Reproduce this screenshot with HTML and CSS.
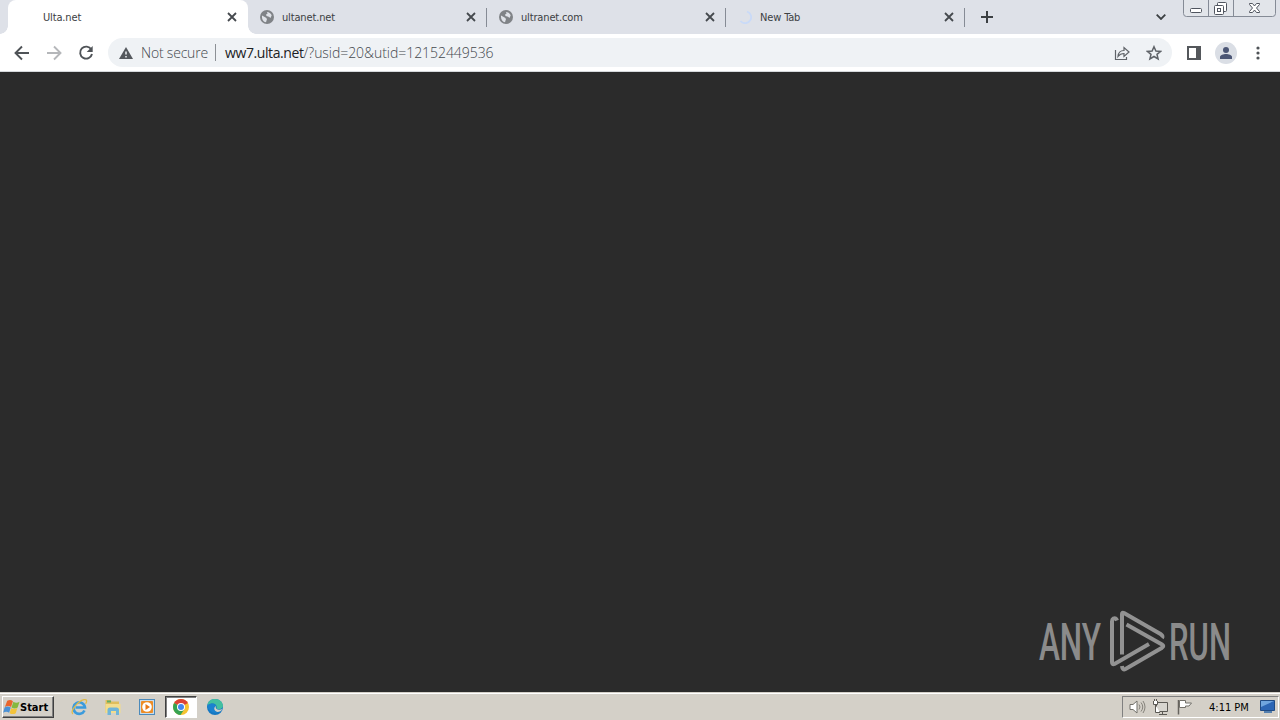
FILE: index.html
```html
<!DOCTYPE html>
<html lang="en">

<head>
    <meta charset="UTF-8">
    <title>Ulta.net</title>
    <link rel="stylesheet" href="styles.css">
</head>

<body>
    <div class="tab-strip">
        <div class="tab active">
            <span class="favicon"></span>
            <span class="title">Ulta.net</span>
            <svg class="close" viewBox="0 0 10 10"><path d="M1 1l8 8M9 1L1 9"/></svg>
        </div>
        <div class="tab">
            <svg class="favicon" viewBox="0 0 14 14"><circle cx="7" cy="7" r="7" fill="#808387"/><path d="M2 5.500l4 2.200 1 1.300-1 3.300C3.500 12 1.600 9.500 2 5.500zM7 2c2 0 4 1.300 4.700 3.300L10.500 8 9 6.700 6.500 6 6 4.500 7.500 3.800z" fill="#dfe2e8"/></svg>
            <span class="title">ultanet.net</span>
            <svg class="close" viewBox="0 0 10 10"><path d="M1 1l8 8M9 1L1 9"/></svg>
        </div>
        <div class="tab">
            <svg class="favicon" viewBox="0 0 14 14"><circle cx="7" cy="7" r="7" fill="#808387"/><path d="M2 5.500l4 2.200 1 1.300-1 3.300C3.500 12 1.600 9.500 2 5.500zM7 2c2 0 4 1.300 4.700 3.300L10.500 8 9 6.700 6.500 6 6 4.500 7.500 3.800z" fill="#dfe2e8"/></svg>
            <span class="title">ultranet.com</span>
            <svg class="close" viewBox="0 0 10 10"><path d="M1 1l8 8M9 1L1 9"/></svg>
        </div>
        <div class="tab">
            <svg class="favicon" viewBox="0 0 14 14"><path d="M9 1.500a6 6 0 1 1-6.500 9.500" fill="none" stroke="#c9daf8" stroke-width="1.800"/></svg>
            <span class="title">New Tab</span>
            <svg class="close" viewBox="0 0 10 10"><path d="M1 1l8 8M9 1L1 9"/></svg>
        </div>
        <svg class="new-tab" viewBox="0 0 12 12"><path d="M6 0v12M0 6h12"/></svg>
        <svg class="chevron" viewBox="0 0 10 6"><path d="M.7.700L5 5 9.300.700"/></svg>
        <svg class="window-buttons" viewBox="0 0 93 17">
            <path d="M.5 0v13.500q0 3 3 3h86q3 0 3-3V0" fill="#e2e5ea" stroke="#858b96"/>
            <path d="M25.500 0v16M50.500 0v16" stroke="#858b96"/>
            <g fill="#fff" stroke="#50555f">
                <rect x="7.500" y="8.500" width="11" height="4" rx="1"/>
                <rect x="34.500" y="2.500" width="9" height="9" rx="1"/>
                <rect x="31.500" y="5.500" width="9" height="9" rx="1"/>
                <rect x="34.500" y="8.500" width="3" height="3"/>
                <path d="M66.500 3.500h3l2 2.500 2-2.500h3v1L73.500 8l3 3.500v1h-3l-2-2.500-2 2.500h-3v-1l3-3.500-3-3.500z"/>
            </g>
        </svg>
    </div>

    <div class="toolbar">
        <svg class="nav" viewBox="0 0 16 16"><path d="M15 8H2M8 1.500L1.500 8 8 14.500"/></svg>
        <svg class="nav disabled" viewBox="0 0 16 16"><path d="M1 8h13M8 1.500L14.500 8 8 14.500"/></svg>
        <svg class="nav" viewBox="0 0 16 16"><path d="M13.300 4.500A6 6 0 1 0 14 9"/><path d="M14.700 1v6h-6z" class="solid"/></svg>
        <div class="omnibox">
            <svg class="warning" viewBox="0 0 14 12"><path d="M7 0l7 12H0z" fill="#54585d"/><path d="M7 4.500v3M7 9v1.500" stroke="#eff2f5" stroke-width="1.500"/></svg>
            <span class="not-secure">Not secure</span>
            <span class="divider"></span>
            <span class="url"><b>ww7.ulta.net</b>/?usid=20&amp;utid=12152449536</span>
            <svg class="share" viewBox="0 0 16 16"><path d="M1.500 5v9.500h11V12M4 11.500C4.300 7.500 6.500 5.500 10 5.500V2.500l5 4.500-5 4.500v-3C7 8.500 5.500 9.500 4 11.500z"/></svg>
            <svg class="star" viewBox="0 0 16 16"><path d="M8 1.700l1.900 4.300 4.700.4-3.600 3 1.100 4.600L8 11.500 3.900 14 5 9.400l-3.600-3 4.700-.4z"/></svg>
        </div>
        <svg class="side-panel" viewBox="0 0 14 14"><rect x="1" y="1" width="12" height="12" fill="#fff" stroke="#54575b" stroke-width="2"/><path d="M9 0h5v14H9z" fill="#54575b"/></svg>
        <svg class="avatar" viewBox="0 0 22 22"><circle cx="11" cy="11" r="11" fill="#dadee5"/><circle cx="11" cy="8" r="3" fill="#4b5675"/><path d="M5 17v-2c0-2 3.500-3 6-3s6 1 6 3v2z" fill="#4b5675"/></svg>
        <svg class="menu" viewBox="0 0 4 14"><circle cx="2" cy="2" r="1.600"/><circle cx="2" cy="7" r="1.600"/><circle cx="2" cy="12" r="1.600"/></svg>
    </div>

    <div class="page">
        <svg class="watermark" viewBox="0 0 194 62">
            <g class="mark-text">
                <text x="1" y="49.500" textLength="62" lengthAdjust="spacingAndGlyphs">ANY</text>
                <text x="131" y="49.500" textLength="62" lengthAdjust="spacingAndGlyphs">RUN</text>
            </g>
            <path class="mark-line" d="M79 10.500q-1-3-3.500-2-1.500 1-1.500 3V52q0 3 2.500 2L111 34M84 44.500V4q0-2 2-1l36.500 21q3 2 1.500 4M88.500 14.500L124 34.500q2.500 1.500 0 3.200L87.500 59q-3 1.500-3.500-3"/>
        </svg>
    </div>

    <div class="taskbar">
        <div class="start">
            <svg viewBox="0 0 18 16">
                <path d="M4.500 1.500q3.500-2 6 .5L8.500 8q-3-2-6.500 0z" fill="#e9652d"/>
                <path d="M11 2.500q3 2 6.500 0L15.500 8.500q-3 2-6.500 0z" fill="#85b83f"/>
                <path d="M1.700 8.500q3-2 6.500 0l-1.700 5.500q-3-2-6.300 0z" fill="#4b91d5"/>
                <path d="M8.700 9q3 2 6.500 0l-1.700 5.500q-3 2-6.500 0z" fill="#f3c33b"/>
            </svg>
            <span>Start</span>
        </div>
        <div class="quick">
            <svg viewBox="0 0 18 18"><path d="M14.500 12.500A5.800 5.800 0 1 1 15 9.500H5.500" fill="none" stroke="#3b9bdc" stroke-width="2.600"/><path d="M3 16C-1 14 8 3 14 1.700c4-.7 2.500 3 1.500 4" fill="none" stroke="#e1ba48" stroke-width="1.300"/></svg>
        </div>
        <div class="quick">
            <svg viewBox="0 0 18 18"><path d="M1.500 2h5l1 1.500H15V15H1.500z" fill="#dfbe5c"/><path d="M3 2.500h4v2H3z" fill="#62ad65"/><path d="M1.500 6h15v9h-15z" fill="#f3dd8d"/><path d="M3.500 17v-5q0-2.500 2.500-2.500h6.500q2.500 0 2.500 2.500v5h-3v-4h-5v4z" fill="#70b5d8"/></svg>
        </div>
        <div class="quick">
            <svg viewBox="0 0 18 18"><rect x="1.500" y="1.500" width="15" height="15" fill="#c7dced" stroke="#4b8abb"/><rect x="3" y="3" width="12" height="12" rx="1" fill="#ed8d27"/><circle cx="9" cy="9" r="4.800" fill="#fff"/><path d="M7.500 6l4.500 3-4.500 3z" fill="#e77818"/></svg>
        </div>
        <div class="quick pressed">
            <svg viewBox="0 0 18 18"><circle cx="9" cy="9" r="8" fill="#f6c331"/><path d="M9 9L2.100 5A8 8 0 0 1 15.900 5z" fill="#dc4336"/><path d="M9 9L2.100 5A8 8 0 0 0 8.500 17L12.500 11z" fill="#36a352"/><circle cx="9" cy="9" r="4" fill="#fff"/><circle cx="9" cy="9" r="3" fill="#4387ef"/></svg>
        </div>
        <div class="quick">
            <svg viewBox="0 0 18 18"><circle cx="9" cy="9" r="8" fill="#1678c2"/><path d="M1.500 7.500C2 3 5 1 9 1c5 0 8 3.500 8 7 0 3-4.500 4-6.500 2.500C12 6 6 3.500 1.500 7.500z" fill="#43bfa0"/><path d="M1.300 8C4 4.500 9 5 10 8c-3 0-3 5 1.500 6.500A8 8 0 0 1 1.300 8z" fill="#1b82cf"/><path d="M10 8c-1.500 3 3 5 6.500 3-1 2-3 3-5 3-4-1-4-5-1.500-6z" fill="#d4d0c8"/></svg>
        </div>
        <div class="tray">
            <svg viewBox="0 0 18 18"><path d="M2 6.500h3L9 3v12l-4-3.500H2z" fill="#fff" stroke="#73716b"/><path d="M11 6.500q2 2.500 0 5M13 4.500q3.500 4.500 0 9M15 3q4 6 0 12" fill="none" stroke="#85827b"/></svg>
            <svg class="network" viewBox="0 0 18 18"><path d="M4.500 4.500h11v9h-11zM7 16.500h8M10.500 14v2" fill="#d7d5cf" stroke="#5b5954"/><path d="M1.500 3v3.500h4V3M2.500 1v2M4.500 1v2M3.500 7v7.500H8" fill="#fff" stroke="#5b5954"/></svg>
            <svg class="flag" viewBox="0 0 18 18"><path d="M2.500 2v14.500" stroke="#66635e" stroke-width="1.500"/><path d="M3.500 2.500h6V5h6l-2.500 3H9.500v1.500h-6z" fill="#fff" stroke="#73716b"/></svg>
            <span class="clock">4:11 PM</span>
            <svg class="desktop" viewBox="0 0 17 16"><path d="M1.500 1.500h14v10h-14z" fill="#2c66b5" stroke="#204b84"/><path d="M2 2h13L2 8z" fill="#6fa5df"/><path d="M5 13h8" stroke="#547fae" stroke-width="2"/></svg>
        </div>
    </div>
</body>

</html>
```
FILE: styles.css
```css
body {
    margin: 0;
    width: 1280px;
    height: 720px;
    overflow: hidden;
    display: flex;
    flex-direction: column;
    font-family: "DejaVu Sans Condensed", "DejaVu Sans", sans-serif;
    background-color: #2b2b2b;
}

svg {
    display: block;
    flex: none;
}

span {
    white-space: nowrap;
}

.tab-strip {
    display: flex;
    align-items: center;
    height: 34px;
    padding-left: 9px;
    background-color: #dee1e8;
}

.tab {
    box-sizing: border-box;
    display: flex;
    align-items: center;
    width: 239px;
    height: 34px;
    padding: 0 11px 0 12px;
    background: linear-gradient(#868b95, #868b95) right 0 top 8px / 1px 19px no-repeat;
    font-size: 11px;
    letter-spacing: -0.15px;
    color: #3c4043;
}

.tab.active {
    position: relative;
    width: 240px;
    margin-left: -1px;
    padding-left: 13px;
    background: #fff;
    border-radius: 8px 8px 0 0;
}

/* curved feet of the active tab */
.tab.active::before,
.tab.active::after {
    content: "";
    position: absolute;
    bottom: 0;
    width: 8px;
    height: 8px;
}

.tab.active::before {
    left: -8px;
    background: radial-gradient(circle at 0 0, transparent 7.5px, #fff 8px);
}

.tab.active::after {
    right: -8px;
    background: radial-gradient(circle at 100% 0, transparent 7.5px, #fff 8px);
}

.favicon {
    width: 14px;
    height: 14px;
    margin-right: 8px;
}

.close {
    width: 10px;
    height: 10px;
    margin-left: auto;
    fill: none;
    stroke: #45494e;
    stroke-width: 1.8;
}

.new-tab {
    width: 12px;
    height: 12px;
    margin-left: 16px;
    stroke: #3c4043;
    stroke-width: 2;
}

.chevron {
    width: 10px;
    height: 6px;
    margin-left: auto;
    fill: none;
    stroke: #3c4043;
    stroke-width: 1.8;
}

.window-buttons {
    width: 93px;
    height: 17px;
    margin: 0 4px 0 17px;
    align-self: flex-start;
}

.toolbar {
    box-sizing: border-box;
    display: flex;
    align-items: center;
    height: 38px;
    padding: 0 20px 0 14px;
    background-color: #fff;
    border-bottom: 1px solid #d5d8dc;
}

.nav {
    width: 16px;
    height: 16px;
    margin-right: 16px;
    fill: none;
    stroke: #4f5357;
    stroke-width: 1.9;
}

.nav.disabled {
    stroke: #b5b7ba;
}

.solid {
    fill: #4f5357;
    stroke: none;
}

.omnibox {
    box-sizing: border-box;
    display: flex;
    align-items: center;
    width: 1064px;
    height: 29px;
    margin-left: -2px;
    padding: 0 10px 0 11px;
    border-radius: 15px;
    background-color: #eff2f5;
    font-family: "Open Sans", "Noto Sans", sans-serif;
    font-weight: 300;
    font-size: 14px;
    color: #44484d;
}

.warning {
    width: 14px;
    height: 12px;
}

.not-secure {
    width: 67px;
    margin-left: 8px;
    letter-spacing: -0.2px;
}

.divider {
    width: 1px;
    height: 17px;
    margin: 0 9px 0 7px;
    background-color: #8c9095;
}

.url {
    letter-spacing: -0.05px;
}

.url b {
    font-weight: 400;
    letter-spacing: -0.4px;
    color: #202124;
}

.share,
.star {
    width: 16px;
    height: 16px;
    margin-left: auto;
    fill: none;
    stroke: #5f6368;
    stroke-width: 1.2;
}

.star {
    margin-left: 16px;
    stroke-width: 1.5;
}

.side-panel {
    width: 14px;
    height: 14px;
    margin-left: 15px;
}

.avatar {
    width: 22px;
    height: 22px;
    margin-left: 14px;
}

.menu {
    width: 4px;
    height: 14px;
    margin-left: auto;
    fill: #4f5357;
}

.page {
    box-sizing: border-box;
    display: flex;
    justify-content: flex-end;
    align-items: flex-end;
    height: 620px;
    padding: 0 48px 20px 0;
    background-color: #2b2b2b;
}

.watermark {
    width: 194px;
    height: 62px;
    overflow: visible;
}

.mark-text {
    font-family: Roboto, sans-serif;
    font-size: 52px;
    font-weight: 500;
    fill: #8b8b8b;
}

.mark-line {
    fill: none;
    stroke: #929292;
    stroke-width: 4;
}

.taskbar {
    box-sizing: border-box;
    display: flex;
    align-items: center;
    height: 28px;
    padding: 1px 1px 0 2px;
    border-top: 1px solid #d4d0c8;
    background-color: #d4d0c8;
    box-shadow: inset 0 1px #fff;
}

.start {
    box-sizing: border-box;
    display: flex;
    align-items: center;
    width: 52px;
    height: 22px;
    margin-right: 9px;
    border: 1px solid;
    border-color: #fff #404040 #404040 #fff;
    box-shadow: inset -1px -1px #808080;
    font-size: 11px;
    font-weight: bold;
    color: #000;
}

.start svg {
    width: 17px;
    height: 16px;
}

.quick {
    box-sizing: border-box;
    display: flex;
    align-items: center;
    justify-content: center;
    width: 32px;
    height: 22px;
    margin-right: 2px;
}

.quick svg {
    width: 18px;
    height: 18px;
}

.quick.pressed {
    border: 1px solid;
    border-color: #404040 #fff #fff #404040;
    box-shadow: inset 1px 1px #808080;
    background-color: #fff;
}

.tray {
    box-sizing: border-box;
    display: flex;
    align-items: center;
    width: 157px;
    height: 22px;
    margin-left: auto;
    padding-left: 5px;
    border: 1px solid;
    border-color: #808080 #fff #fff #808080;
    font-size: 11px;
    color: #000;
}

.tray svg {
    width: 18px;
    height: 18px;
}

.tray .network,
.tray .flag {
    margin-left: 6px;
}

.clock {
    width: 40px;
    margin-left: 15px;
}

.tray .desktop {
    width: 17px;
    height: 16px;
    margin-left: 10px;
}
```
